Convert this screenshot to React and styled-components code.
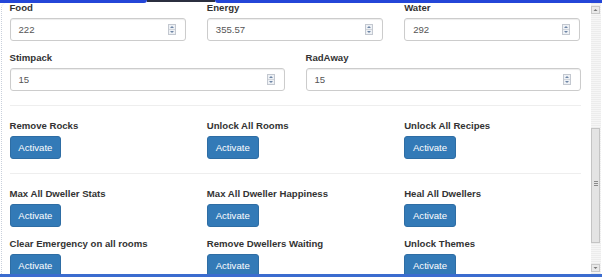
import styled, { createGlobalStyle } from "styled-components"

const GlobalStyle = createGlobalStyle`
    html, body {
        margin: 0;
        padding: 0;
        background: #ffffff;
    }
    * {
        box-sizing: border-box;
    }
`

const Frame = styled.div`
    width: 602px;
    height: 277px;
    display: flex;
    flex-direction: column;
    overflow: hidden;
    background: #ffffff;
    border-bottom: 3px solid #3b6ccf;
    font-family: "Liberation Sans", Arial, sans-serif;
`

const TopBar = styled.div`
    height: 3px;
    flex: none;
    display: flex;
`

const TopSegment = styled.div`
    height: 3px;
    width: ${(p) => (p.$width ? `${p.$width}px` : "auto")};
    flex: ${(p) => (p.$width ? "none" : "1")};
    background: #2446d8;
    border-bottom-left-radius: ${(p) => (p.$roundLeft ? "3px" : "0")};
    border-bottom-right-radius: ${(p) => (p.$roundRight ? "3px" : "0")};
`

const TopGap = styled.div`
    width: 68px;
    height: 2px;
    background: #2b2f3f;
`

const Body = styled.div`
    flex: 1;
    min-height: 0;
    display: flex;
    padding-left: 1px;
`

const Content = styled.div`
    width: 590px;
    flex: none;
    overflow: hidden;
    border-left: 1px dotted #c9d0dc;
    border-top-left-radius: 5px;
    padding: 0 10.5px 0 7.5px;
`

const Inner = styled.div`
    margin-top: -2px;
`

const Row = styled.div`
    display: grid;
    grid-template-columns: repeat(${(p) => p.$cols}, 1fr);
    column-gap: 21px;
`

const Group = styled.div`
    margin-bottom: 10px;
    min-width: 0;
`

const Label = styled.div`
    font-size: 9.6px;
    line-height: 13.6px;
    font-weight: 700;
    color: #333333;
    margin-bottom: 3.5px;
    white-space: nowrap;
`

const Field = styled.div`
    height: 23px;
    display: flex;
    align-items: center;
    padding: 0 9px 0 8px;
    border: 1px solid #cccccc;
    border-radius: 3px;
    box-shadow: inset 0 1px 1px rgba(0, 0, 0, 0.075);
    background: #ffffff;
`

const Value = styled.span`
    flex: 1;
    font-size: 9.6px;
    color: #555555;
`

const SpinBox = styled.svg`
    flex: none;
    display: block;
`

const Divider = styled.hr`
    border: 0;
    border-top: 1px solid #eeeeee;
    margin: 3.5px 0 13.5px;
`

const Button = styled.button`
    display: inline-block;
    height: 23px;
    padding: 0 7.8px;
    font-family: inherit;
    font-size: 9.6px;
    color: #ffffff;
    background: #337ab7;
    border: 1px solid #2e6da4;
    border-radius: 3px;
    cursor: pointer;
`

const Scrollbar = styled.div`
    width: 10px;
    flex: none;
    display: flex;
    flex-direction: column;
    padding: 3px 1px 2px 0;
    background: repeating-linear-gradient(
        0deg,
        #ececec 0,
        #ececec 1px,
        #f6f6f6 1px,
        #f6f6f6 2px
    );
`

const ScrollArrow = styled.svg`
    display: block;
    flex: none;
`

const Track = styled.div`
    flex: 1;
    min-height: 0;
`

const Thumb = styled.div`
    margin-top: ${(p) => p.$offset}px;
    height: ${(p) => p.$size}px;
    background: #e4e4e4;
    border: 1px solid #c4c4c4;
    display: flex;
    flex-direction: column;
    justify-content: flex-end;
    align-items: center;
    padding-bottom: 56px;
`

const Grip = styled.div`
    width: 4px;
    height: 5px;
    background: repeating-linear-gradient(
        180deg,
        #8a8a8a 0,
        #8a8a8a 1px,
        transparent 1px,
        transparent 2px
    );
`

const Spinner = () => (
    <SpinBox width="8" height="11" viewBox="0 0 8 11">
        <rect x="0.5" y="0.5" width="7" height="10" fill="#eef1f5" stroke="#c3c8d0" />
        <line x1="1" y1="5.5" x2="7" y2="5.5" stroke="#d0d4da" />
        <path d="M2 4 L4 2 L6 4 Z" fill="#6e86a6" />
        <path d="M2 7 L4 9 L6 7 Z" fill="#6e86a6" />
    </SpinBox>
)

const Arrow = ({ down }) => (
    <ScrollArrow width="9" height="8" viewBox="0 0 9 8">
        <rect x="0.5" y="0.5" width="8" height="7" fill="#e9e9e9" stroke="#c8c8c8" />
        {down ? (
            <path d="M2.5 3 L4.5 5 L6.5 3 Z" fill="#777" />
        ) : (
            <path d="M2.5 5 L4.5 3 L6.5 5 Z" fill="#777" />
        )}
    </ScrollArrow>
)

const InputGroup = ({ label, value }) => (
    <Group>
        <Label>{label}</Label>
        <Field>
            <Value>{value}</Value>
            <Spinner />
        </Field>
    </Group>
)

const ActionGroup = ({ label }) => (
    <Group>
        <Label>{label}</Label>
        <Button>Activate</Button>
    </Group>
)

const resources = [
    { label: "Food", value: "222" },
    { label: "Energy", value: "355.57" },
    { label: "Water", value: "292" },
]

const items = [
    { label: "Stimpack", value: "15" },
    { label: "RadAway", value: "15" },
]

const firstActions = ["Remove Rocks", "Unlock All Rooms", "Unlock All Recipes"]

const moreActions = [
    "Max All Dweller Stats",
    "Max All Dweller Happiness",
    "Heal All Dwellers",
    "Clear Emergency on all rooms",
    "Remove Dwellers Waiting",
    "Unlock Themes",
]

const App = () => {
    return (
        <>
            <GlobalStyle />
            <Frame>
                <TopBar>
                    <TopSegment $width={147} $roundRight />
                    <TopGap />
                    <TopSegment $roundLeft />
                </TopBar>
                <Body>
                    <Content>
                        <Inner>
                            <Row $cols={3}>
                                {resources.map((r) => (
                                    <InputGroup key={r.label} {...r} />
                                ))}
                            </Row>
                            <Row $cols={2}>
                                {items.map((r) => (
                                    <InputGroup key={r.label} {...r} />
                                ))}
                            </Row>
                            <Divider />
                            <Row $cols={3}>
                                {firstActions.map((a) => (
                                    <ActionGroup key={a} label={a} />
                                ))}
                            </Row>
                            <Divider />
                            <Row $cols={3}>
                                {moreActions.map((a) => (
                                    <ActionGroup key={a} label={a} />
                                ))}
                            </Row>
                        </Inner>
                    </Content>
                    <Scrollbar>
                        <Arrow />
                        <Track>
                            <Thumb $offset={114} $size={115}>
                                <Grip />
                            </Thumb>
                        </Track>
                        <Arrow down />
                    </Scrollbar>
                </Body>
            </Frame>
        </>
    )
}

export default App
